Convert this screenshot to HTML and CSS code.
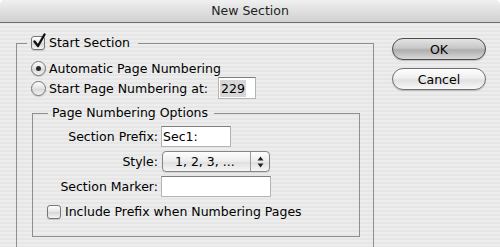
FILE: index.html
```html
<!DOCTYPE html>
<html>
<head>
<meta charset="utf-8">
<link rel="stylesheet" href="styles.css">
</head>
<body>
<div class="window">
  <div class="titlebar">New Section</div>
  <div class="content">
    <fieldset class="group outer">
      <legend class="legend outer-legend"><span class="check checked"><svg class="tick" viewBox="0 0 14 16" width="14" height="16"><path d="M2.5 8.5 L6 13 L12.5 1.5" fill="none" stroke="#111" stroke-width="2.4" stroke-linejoin="round" stroke-linecap="round"/></svg></span>Start Section</legend>
      <div class="radio-row r1"><span class="radio on"></span>Automatic Page Numbering</div>
      <div class="radio-row r2"><span class="radio"></span>Start Page Numbering at:<span class="field num"><span class="sel">229</span></span></div>
      <fieldset class="group inner">
        <legend class="legend inner-legend">Page Numbering Options</legend>
        <div class="form">
          <span class="label">Section Prefix:</span><span class="field prefix">Sec1:</span>
          <span class="label">Style:</span>
          <span class="popup"><span class="popup-text">1, 2, 3, ...</span><span class="arrows"><svg viewBox="0 0 7 12" width="7" height="12"><path d="M3.5 0.5 L6.5 4.5 L0.5 4.5 Z M3.5 11.5 L6.5 7.5 L0.5 7.5 Z" fill="#222"/></svg></span></span>
          <span class="label">Section Marker:</span><span class="field marker"></span>
        </div>
        <div class="check-row"><span class="check"></span>Include Prefix when Numbering Pages</div>
      </fieldset>
    </fieldset>
    <div class="buttons">
      <button class="btn default">OK</button>
      <button class="btn">Cancel</button>
    </div>
  </div>
</div>
</body>
</html>
```
FILE: styles.css
```css
* { box-sizing: border-box; }
body {
  margin: 0;
  background: #fff;
  font-family: "DejaVu Sans", sans-serif;
  font-size: 12.5px;
  color: #000;
}
.window {
  width: 500px;
  height: 247px;
  overflow: hidden;
  border-radius: 5px 5px 0 0;
  background: repeating-linear-gradient(to bottom, #ededed 0 2px, #e6e6e6 2px 4px);
}
.titlebar {
  height: 23px;
  border-bottom: 1px solid #6c6c6c;
  background: linear-gradient(#f0f0f0, #d0d0d0);
  text-align: center;
  line-height: 22px;
  color: #1e1e1e;
  border-radius: 5px 5px 0 0;
}
.content {
  display: flex;
  align-items: flex-start;
  padding: 12px 0 0 16px;
}
.group {
  margin: 0;
  border: 1px solid #8e8e8e;
}
.outer {
  width: 358px;
  padding: 0 13px 20px 14px;
}
.legend {
  display: flex;
  align-items: center;
  height: 16px;
  line-height: 16px;
}
.outer-legend {
  margin-left: -4px;
  padding: 0 8px 0 4px;
}
.inner-legend {
  margin-left: 1px;
  padding: 0 6px 0 4px;
}
.check {
  position: relative;
  flex: none;
  width: 14px;
  height: 14px;
  margin-right: 4px;
  border: 1px solid #767676;
  border-radius: 3px;
  background: linear-gradient(#ffffff, #e4e4e4 50%, #d6d6d6 51%, #f4f4f4);
  box-shadow: 0 1px 1px rgba(0,0,0,0.15);
}
.tick {
  position: absolute;
  left: 0;
  top: -4px;
}
.radio {
  position: relative;
  flex: none;
  width: 15px;
  height: 15px;
  margin-right: 3px;
  border: 1px solid #767676;
  border-radius: 50%;
  background: linear-gradient(#ffffff, #e2e2e2 50%, #d4d4d4 51%, #f4f4f4);
  box-shadow: 0 1px 1px rgba(0,0,0,0.15);
}
.radio.on::after {
  content: "";
  position: absolute;
  left: 4px;
  top: 4px;
  width: 5px;
  height: 5px;
  border-radius: 50%;
  background: #2a2a2a;
}
.radio-row {
  display: flex;
  align-items: center;
}
.r1 { height: 18px; margin-top: 8px; }
.r2 { height: 22px; }
.field {
  display: flex;
  align-items: center;
  height: 21px;
  background: #fff;
  border: 1px solid #b4b4b4;
  border-top-color: #7e7e7e;
  padding-left: 1px;
}
.num {
  width: 38px;
  height: 22px;
  margin-left: 10px;
}
.sel { background: #d6d6d6; padding: 0 1px; line-height: 17px; }
.inner {
  width: 328px;
  margin: 6px 0 0 1px;
  padding: 0 10px 14px 14px;
}
.form {
  display: grid;
  grid-template-columns: 111px auto;
  column-gap: 3px;
  row-gap: 4px;
  margin-top: 5px;
  justify-items: start;
  align-items: center;
}
.label { justify-self: end; }
.prefix { width: 70px; }
.marker { width: 110px; }
.popup {
  display: flex;
  width: 108px;
  height: 21px;
  margin-left: 1px;
  border: 1px solid #868686;
  border-radius: 4px;
  background: linear-gradient(#fdfdfd, #ececec 50%, #dedede 51%, #f6f6f6);
  box-shadow: 0 1px 1px rgba(0,0,0,0.12);
}
.popup-text {
  flex: 1;
  padding-left: 12px;
  line-height: 19px;
}
.arrows {
  width: 19px;
  display: flex;
  align-items: center;
  justify-content: center;
  border-left: 1px solid #9a9a9a;
}
.check-row {
  display: flex;
  align-items: center;
  height: 21px;
  margin-top: 4px;
}
.buttons {
  display: flex;
  flex-direction: column;
  gap: 8px;
  margin: 3px 0 0 18px;
}
.btn {
  width: 94px;
  height: 22px;
  padding: 0;
  border: 1px solid #707070;
  border-radius: 11px;
  font: 12.5px "DejaVu Sans", sans-serif;
  color: #000;
  background: linear-gradient(#fefefe, #efefef 45%, #e0e0e0 55%, #f8f8f8);
  box-shadow: 0 1px 1px rgba(0,0,0,0.2);
}
.btn.default {
  border-color: #4c4c4c;
  background: linear-gradient(#e4e4e4, #c8c8c8 45%, #aeaeae 55%, #d8d8d8);
}
```
